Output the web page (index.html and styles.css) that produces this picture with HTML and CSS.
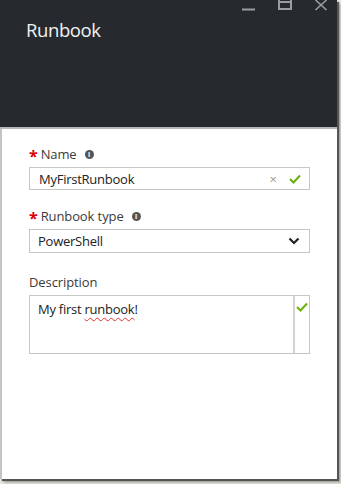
FILE: index.html
```html
<!DOCTYPE html>
<html>
<head>
<meta charset="utf-8">
<link rel="stylesheet" href="styles.css">
</head>
<body>
<div class="panel">
  <header class="header">
    <h1 class="title">Runbook</h1>
    <div class="controls">
      <svg class="ctl" width="14" height="12" viewBox="0 0 14 12"><path d="M0 9.5H13" stroke="#9a9da0" stroke-width="2"/></svg>
      <svg class="ctl" width="14" height="12" viewBox="0 0 14 12"><rect x="1" y="-3" width="12" height="12" fill="none" stroke="#9a9da0" stroke-width="2"/><path d="M1 2H13" stroke="#9a9da0" stroke-width="2"/></svg>
      <svg class="ctl" width="14" height="12" viewBox="0 0 14 12"><path d="M1.5 0L12.5 10M12.5 0L1.5 10" stroke="#9a9da0" stroke-width="1.6"/></svg>
    </div>
  </header>
  <main class="body">
    <div class="field">
      <label class="label"><span class="req">*</span><span>Name</span><span class="info">i</span></label>
      <div class="input">
        <span class="value">MyFirstRunbook</span>
        <span class="clear">×</span>
        <svg class="check" width="12" height="10" viewBox="0 0 12 10"><path d="M1 5L4.5 8.5L11 1.5" fill="none" stroke="#6aaf08" stroke-width="2"/></svg>
      </div>
    </div>
    <div class="field">
      <label class="label"><span class="req">*</span><span>Runbook type</span><span class="info">i</span></label>
      <div class="input select">
        <span class="value sel">PowerShell</span>
        <svg class="chev" width="12" height="8" viewBox="0 0 12 8"><path d="M1.5 1.5L6 6L10.5 1.5" fill="none" stroke="#222" stroke-width="2.2"/></svg>
      </div>
    </div>
    <div class="field">
      <label class="label">Description</label>
      <div class="textarea">
        <div class="textbody">My first <span class="typo">runbook</span>!</div>
        <div class="scroll">
          <svg class="check" width="12" height="10" viewBox="0 0 12 10"><path d="M1 5L4.5 8.5L11 1.5" fill="none" stroke="#6aaf08" stroke-width="2"/></svg>
        </div>
      </div>
    </div>
  </main>
</div>
</body>
</html>
```

FILE: styles.css
```css
html, body {
  margin: 0;
  padding: 0;
}
body {
  width: 341px;
  height: 484px;
  background: #e4e4dc;
  font-family: "Open Sans", "Noto Sans", sans-serif;
  overflow: hidden;
}
.panel {
  width: 337px;
  height: 479px;
  background: #fff;
  box-shadow: 2px 2px 1px #555, 4px 4px 2px #b8b8b0;
  display: flex;
  flex-direction: column;
}
.header {
  height: 127px;
  background: #262a2f;
  border-bottom: 2px solid #b5b7b8;
  position: relative;
  flex: none;
}
.title {
  margin: 0;
  padding: 17px 0 0 26px;
  font-size: 18.5px;
  font-weight: 400;
  color: #f2f2f2;
  line-height: 26px;
  letter-spacing: -0.4px;
}
.controls {
  position: absolute;
  top: 0;
  right: 9px;
  display: flex;
  gap: 22px;
}
.ctl { display: block; }
.body {
  flex: 1;
  border-left: 2px solid #c4c4c4;
  padding: 15px 27px 0 27px;
}
.field { margin-bottom: 16px; }
.field:nth-child(2) { margin-bottom: 19px; }
.label {
  display: flex;
  align-items: center;
  height: 20px;
  font-size: 13px;
  color: #3b3b3b;
  margin-bottom: 3px;
  letter-spacing: -0.1px;
}
.req {
  color: #e00000;
  font-size: 16px;
  font-weight: 700;
  margin-left: 0;
  margin-right: 3px;
  position: relative;
  top: 2px;
}
.info {
  display: inline-flex;
  align-items: center;
  justify-content: center;
  width: 9px;
  height: 9px;
  border-radius: 50%;
  background: #555;
  color: #fff;
  font-size: 7px;
  font-weight: 700;
  margin-left: 8px;
  line-height: 1;
}
.input {
  height: 21px;
  border: 1px solid #c6c6c6;
  display: flex;
  align-items: center;
  padding: 0 8px 0 9px;
}
.select { height: 22px; padding-left: 8px; }
.value {
  flex: 1;
  font-size: 13px;
  color: #222;
  letter-spacing: -0.25px;
}
.clear {
  color: #9a9a9a;
  font-size: 13px;
  margin-right: 12px;
}
.check { display: block; }
.chev { margin-right: 1px; }
.textarea {
  height: 57px;
  border: 1px solid #c6c6c6;
  display: flex;
}
.textbody {
  flex: 1;
  padding: 3px 0 0 8px;
  font-size: 13px;
  color: #222;
  line-height: 20px;
  letter-spacing: -0.25px;
}
.typo {
  text-decoration: underline wavy #e03030;
  text-decoration-thickness: 1px;
  text-underline-offset: 3px;
}
.scroll {
  width: 14px;
  border-left: 2px solid #d2d2d2;
  padding: 6px 0 0 0;
  display: flex;
  justify-content: center;
  align-items: flex-start;
}
```
